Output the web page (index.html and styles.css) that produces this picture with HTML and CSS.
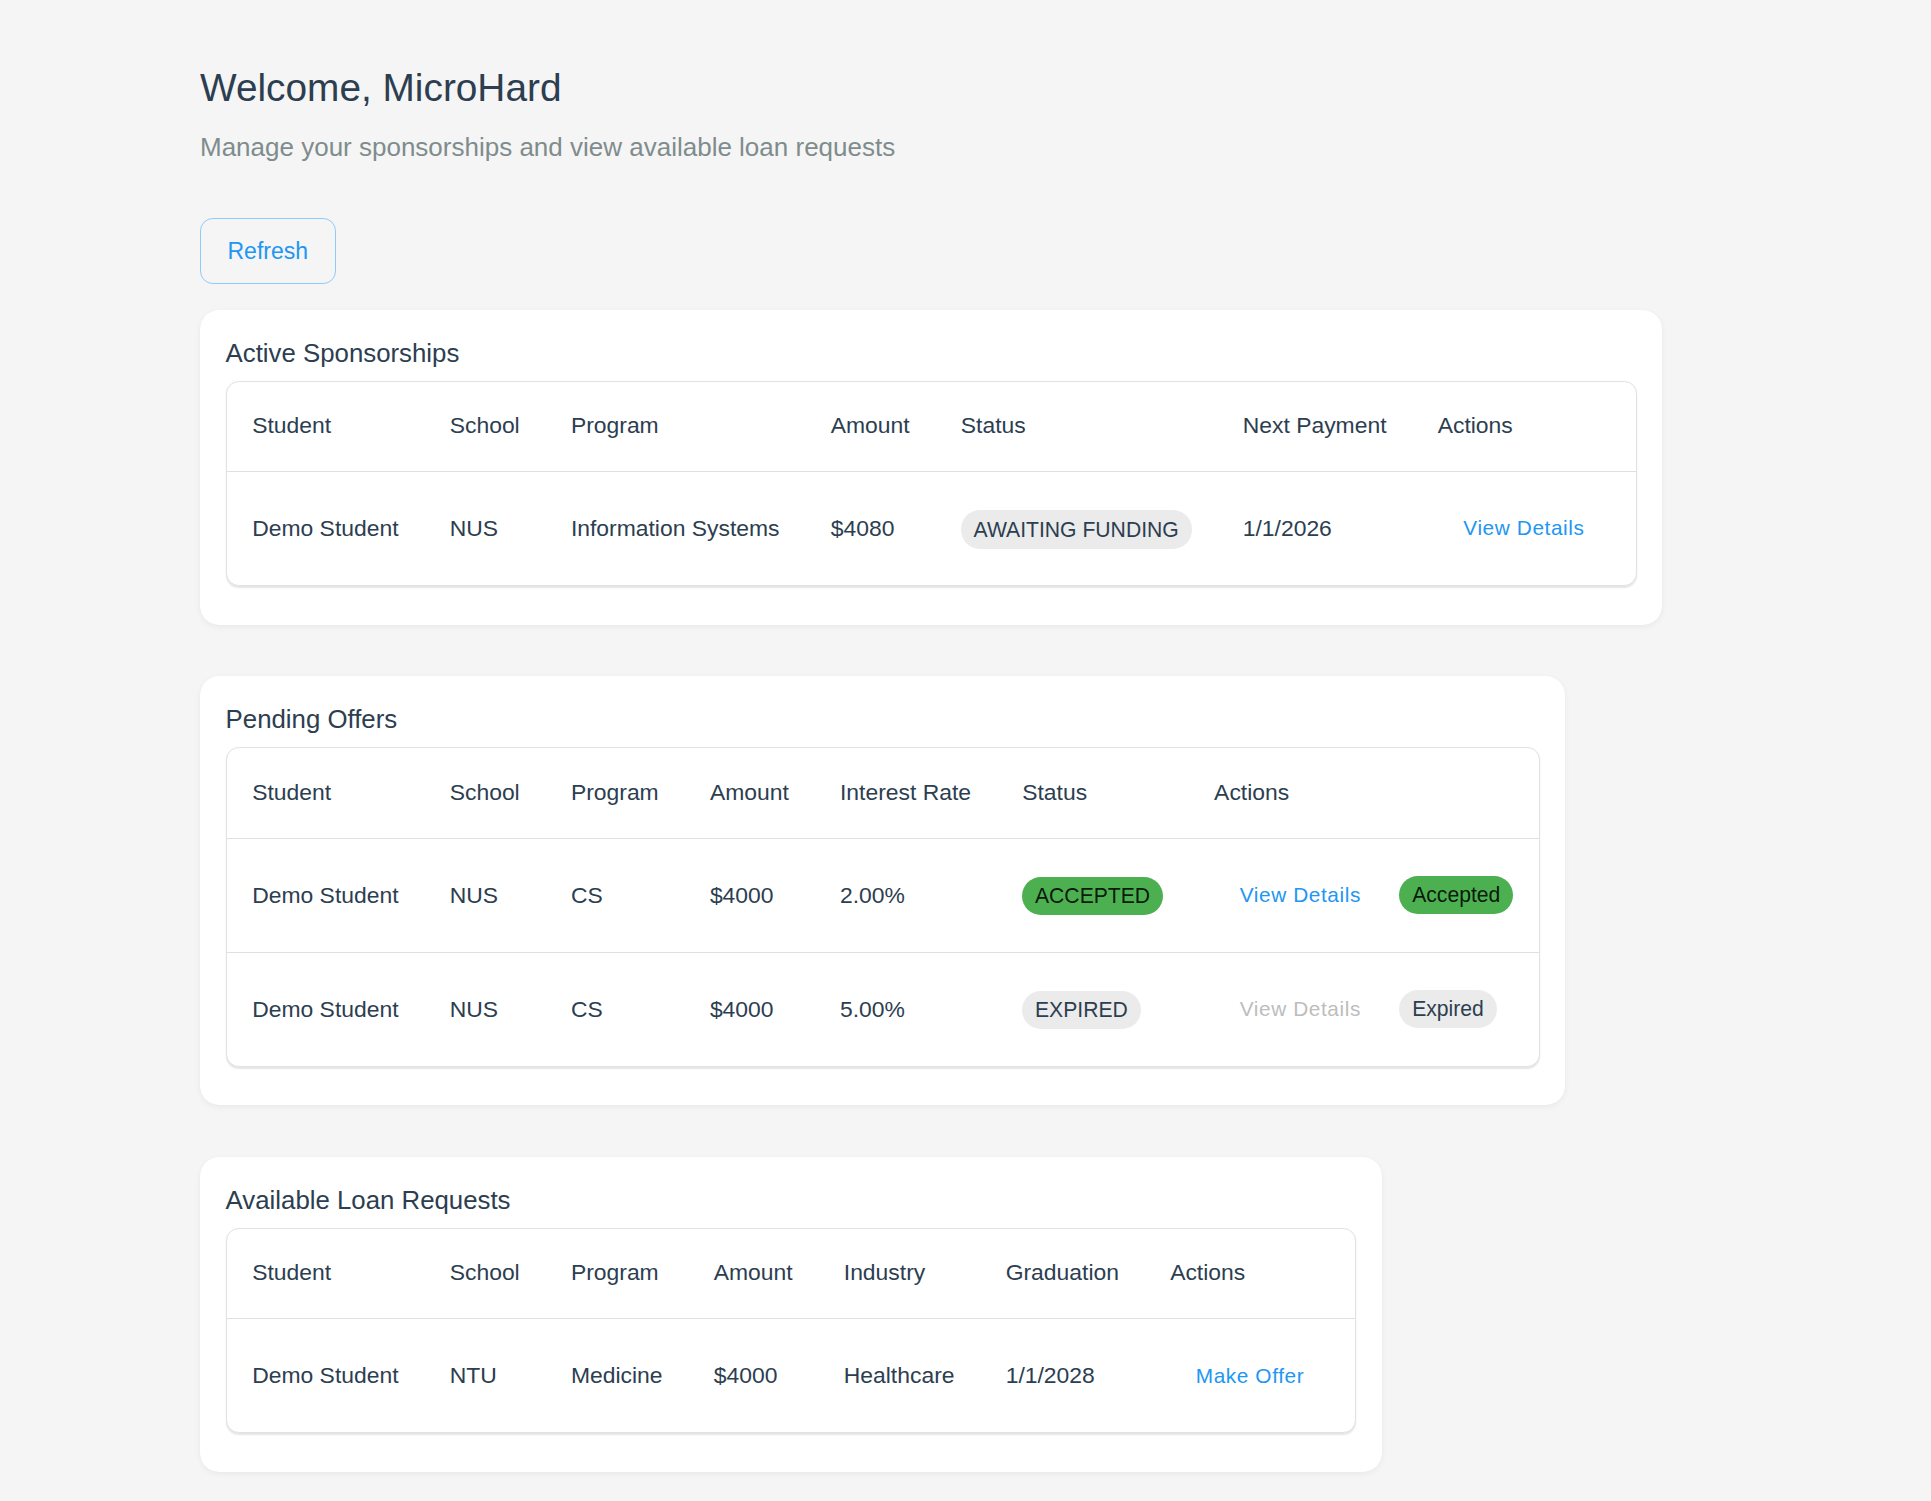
FILE: index.html
```html
<!DOCTYPE html>
<html lang="en">
<head>
<meta charset="utf-8">
<title>Sponsor Dashboard</title>
<link rel="stylesheet" href="styles.css">
</head>
<body>
<main class="page">
  <h1 class="title">Welcome, MicroHard</h1>
  <p class="subtitle">Manage your sponsorships and view available loan requests</p>
  <button class="btn-outlined" type="button">Refresh</button>

  <section class="card">
    <h2 class="card-title">Active Sponsorships</h2>
    <div class="table-wrap">
      <table class="data">
        <thead>
          <tr><th>Student</th><th>School</th><th>Program</th><th>Amount</th><th>Status</th><th>Next Payment</th><th>Actions</th></tr>
        </thead>
        <tbody>
          <tr>
            <td>Demo Student</td><td>NUS</td><td>Information Systems</td><td>$4080</td>
            <td><span class="chip chip-gray">AWAITING FUNDING</span></td>
            <td>1/1/2026</td>
            <td><div class="actions"><button class="btn-text" type="button">View Details</button></div></td>
          </tr>
        </tbody>
      </table>
    </div>
  </section>

  <section class="card card-gap">
    <h2 class="card-title">Pending Offers</h2>
    <div class="table-wrap">
      <table class="data">
        <thead>
          <tr><th>Student</th><th>School</th><th>Program</th><th>Amount</th><th>Interest Rate</th><th>Status</th><th>Actions</th></tr>
        </thead>
        <tbody>
          <tr>
            <td>Demo Student</td><td>NUS</td><td>CS</td><td>$4000</td><td>2.00%</td>
            <td><span class="chip chip-green">ACCEPTED</span></td>
            <td><div class="actions"><button class="btn-text" type="button">View Details</button><span class="chip chip-green">Accepted</span></div></td>
          </tr>
          <tr>
            <td>Demo Student</td><td>NUS</td><td>CS</td><td>$4000</td><td>5.00%</td>
            <td><span class="chip chip-gray">EXPIRED</span></td>
            <td><div class="actions"><button class="btn-text is-disabled" type="button" disabled>View Details</button><span class="chip chip-gray">Expired</span></div></td>
          </tr>
        </tbody>
      </table>
    </div>
  </section>

  <section class="card card-gap">
    <h2 class="card-title">Available Loan Requests</h2>
    <div class="table-wrap">
      <table class="data">
        <thead>
          <tr><th>Student</th><th>School</th><th>Program</th><th>Amount</th><th>Industry</th><th>Graduation</th><th>Actions</th></tr>
        </thead>
        <tbody>
          <tr>
            <td>Demo Student</td><td>NTU</td><td>Medicine</td><td>$4000</td><td>Healthcare</td><td>1/1/2028</td>
            <td><div class="actions"><button class="btn-text" type="button">Make Offer</button></div></td>
          </tr>
        </tbody>
      </table>
    </div>
  </section>
</main>
</body>
</html>
```
FILE: styles.css
```css
* { box-sizing: border-box; }

html, body {
  margin: 0;
  background: #f5f5f5;
}

body {
  font-family: "Liberation Sans", Arial, Helvetica, sans-serif;
  color: #2c3e50;
}

.page {
  display: flex;
  flex-direction: column;
  align-items: flex-start;
  padding: 65px 200px 20px;
}

.title {
  margin: 0;
  font-size: 38.8px;
  line-height: 46px;
  font-weight: 400;
  color: #2c3e50;
}

.subtitle {
  margin: 18px 0 0;
  font-size: 26px;
  line-height: 36px;
  color: #7f8c8d;
}

.btn-outlined {
  margin-top: 53px;
  height: 66px;
  padding: 0 26.5px;
  border: 1px solid #90caf9;
  border-radius: 12.8px;
  background: transparent;
  color: #2196f3;
  font-family: inherit;
  font-size: 23px;
  line-height: 1;
  cursor: pointer;
}

.card {
  margin-top: 25.7px;
  background: #ffffff;
  border-radius: 19.2px;
  padding: 27px 25.6px 38.4px;
  box-shadow: 0 2px 6px rgba(0, 0, 0, 0.05), 0 0 1px rgba(0, 0, 0, 0.05);
}

.card-gap {
  margin-top: 51.6px;
}

.card-title {
  margin: 0 0 12px;
  font-size: 25.8px;
  line-height: 32px;
  font-weight: 400;
  color: #2c3e50;
}

.table-wrap {
  border: 1px solid #e2e2e2;
  border-radius: 12.8px;
  overflow: hidden;
  background: #fff;
  box-shadow: 0 1.5px 1.5px rgba(0, 0, 0, 0.10);
}

.data {
  border-collapse: collapse;
}

.data th,
.data td {
  padding: 24.6px 25.6px 26.6px;
  text-align: left;
  font-size: 22.9px;
  line-height: 38.4px;
  font-weight: 400;
  color: #2c3e50;
  white-space: nowrap;
  border-bottom: 1px solid #e0e0e0;
  vertical-align: middle;
}

.data td {
  padding-top: 25.3px;
  padding-bottom: 25.9px;
}

.data tbody tr:last-child td {
  border-bottom: 0;
}

.actions {
  display: flex;
  align-items: center;
  gap: 12.8px;
  height: 61.8px;
}

.btn-text {
  display: block;
  padding: 0 25.6px;
  border: 0;
  background: transparent;
  color: #2196f3;
  font-family: inherit;
  font-size: 20.8px;
  letter-spacing: 0.6px;
  line-height: 38px;
  cursor: pointer;
}

.btn-text.is-disabled {
  color: #bdbdbd;
  cursor: default;
}

.chip {
  display: inline-flex;
  align-items: center;
  height: 38.4px;
  padding: 0 12.8px;
  border-radius: 19.2px;
  font-size: 21.15px;
  line-height: 1;
  vertical-align: middle;
  white-space: nowrap;
}

.chip-gray {
  background: #ebebeb;
  color: #2c3e50;
}

.chip-green {
  background: #4caf50;
  color: rgba(0, 0, 0, 0.87);
}
```
